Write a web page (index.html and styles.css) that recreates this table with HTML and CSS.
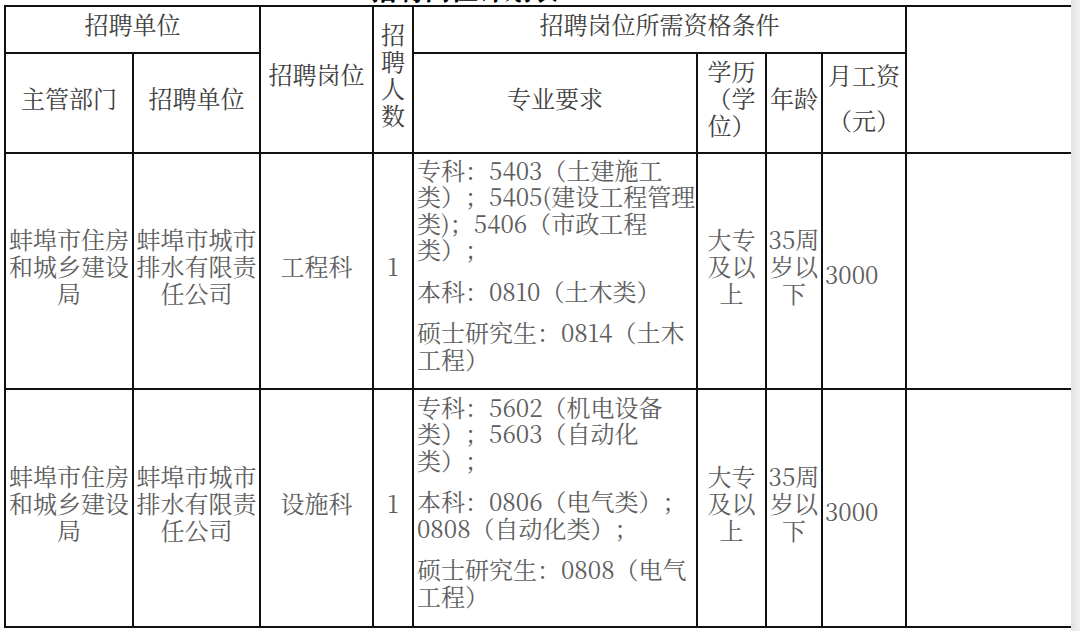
FILE: index.html
```html
<!DOCTYPE html>
<html lang="zh">
<head>
<meta charset="utf-8">
<title>招聘岗位</title>
<link rel="stylesheet" href="styles.css">
</head>
<body>
<div class="page">
  <div class="title"><span class="title-text">招聘岗位计划表</span></div>
  <table class="grid">
    <colgroup>
      <col class="c-dept"><col class="c-unit"><col class="c-post"><col class="c-num"><col class="c-major"><col class="c-edu"><col class="c-age"><col class="c-pay"><col>
    </colgroup>
    <thead>
      <tr class="hr1">
        <th colspan="2">招聘单位</th>
        <th rowspan="2">招聘岗位</th>
        <th rowspan="2">招<br>聘<br>人<br>数</th>
        <th colspan="4">招聘岗位所需资格条件</th>
        <th rowspan="2"></th>
      </tr>
      <tr class="hr2">
        <th>主管部门</th>
        <th>招聘单位</th>
        <th>专业要求</th>
        <th>学历<br>（学<br>位）</th>
        <th>年龄</th>
        <th class="pay-head"><p>月工资</p><p>（元）</p></th>
      </tr>
    </thead>
    <tbody>
      <tr class="r1">
        <td>蚌埠市住房<br>和城乡建设<br>局</td>
        <td>蚌埠市城市<br>排水有限责<br>任公司</td>
        <td>工程科</td>
        <td>1</td>
        <td class="major">
          <p>专科：5403（土建施工<br>类）；5405(建设工程管理<br>类)；5406（市政工程<br>类）；</p>
          <p>本科：0810（土木类）</p>
          <p>硕士研究生：0814（土木<br>工程）</p>
        </td>
        <td>大专<br>及以<br>上</td>
        <td>35周<br>岁以<br>下</td>
        <td class="pay">3000</td>
        <td></td>
      </tr>
      <tr class="r2">
        <td>蚌埠市住房<br>和城乡建设<br>局</td>
        <td>蚌埠市城市<br>排水有限责<br>任公司</td>
        <td>设施科</td>
        <td>1</td>
        <td class="major">
          <p>专科：5602（机电设备<br>类）；5603（自动化<br>类）；</p>
          <p>本科：0806（电气类）；<br>0808（自动化类）；</p>
          <p>硕士研究生：0808（电气<br>工程）</p>
        </td>
        <td>大专<br>及以<br>上</td>
        <td>35周<br>岁以<br>下</td>
        <td class="pay">3000</td>
        <td></td>
      </tr>
    </tbody>
  </table>
</div>
<div class="scrollbar"></div>
</body>
</html>
```

FILE: styles.css
```css
html, body {
  margin: 0;
  padding: 0;
  background: #fff;
}

body {
  display: flex;
  width: 1080px;
  height: 631px;
  overflow: hidden;
  font-family: "Noto Serif CJK SC", "Noto Sans CJK SC", serif;
  text-spacing-trim: space-all;
}

.page {
  flex: none;
  width: 1071px;
  height: 631px;
  overflow: hidden;
}

.scrollbar {
  flex: none;
  width: 9px;
  height: 631px;
  background: linear-gradient(to right, #e1e1e1, #f1f1f1);
}

.title {
  height: 5px;
  overflow: hidden;
  padding-left: 370px;
}

.title-text {
  display: block;
  font-size: 27px;
  line-height: 28px;
  margin-top: -25px;
  font-weight: bold;
  color: #000;
  white-space: nowrap;
}

.grid {
  border-collapse: collapse;
  table-layout: fixed;
  width: 1073px;
  margin-left: 4px;
  text-spacing-trim: space-all;
}

.c-dept { width: 128px; }
.c-unit { width: 127px; }
.c-post { width: 113px; }
.c-num { width: 40px; }
.c-major { width: 284px; }
.c-edu { width: 69px; }
.c-age { width: 56px; }
.c-pay { width: 84px; }

.grid th,
.grid td {
  border: 2px solid #111;
  font-size: 24px;
  line-height: 27px;
  font-weight: normal;
  text-align: center;
  vertical-align: middle;
  white-space: nowrap;
  padding: 0 0 12px;
}

.grid th {
  color: #404040;
}

.grid td {
  color: #5e5e5e;
}

.hr1 { height: 47px; }
.hr2 { height: 100px; }
.r1 { height: 236px; }
.r2 { height: 238px; }

.pay-head p {
  margin: 0;
}

.pay-head p + p {
  margin-top: 18px;
}

.grid td.major {
  text-align: left;
  padding: 2px 0 0 3px;
  line-height: 26.5px;
}

.major p {
  margin: 0 0 15px;
}

.grid td.pay {
  text-align: left;
  padding: 4px 0 0 2px;
}
```
